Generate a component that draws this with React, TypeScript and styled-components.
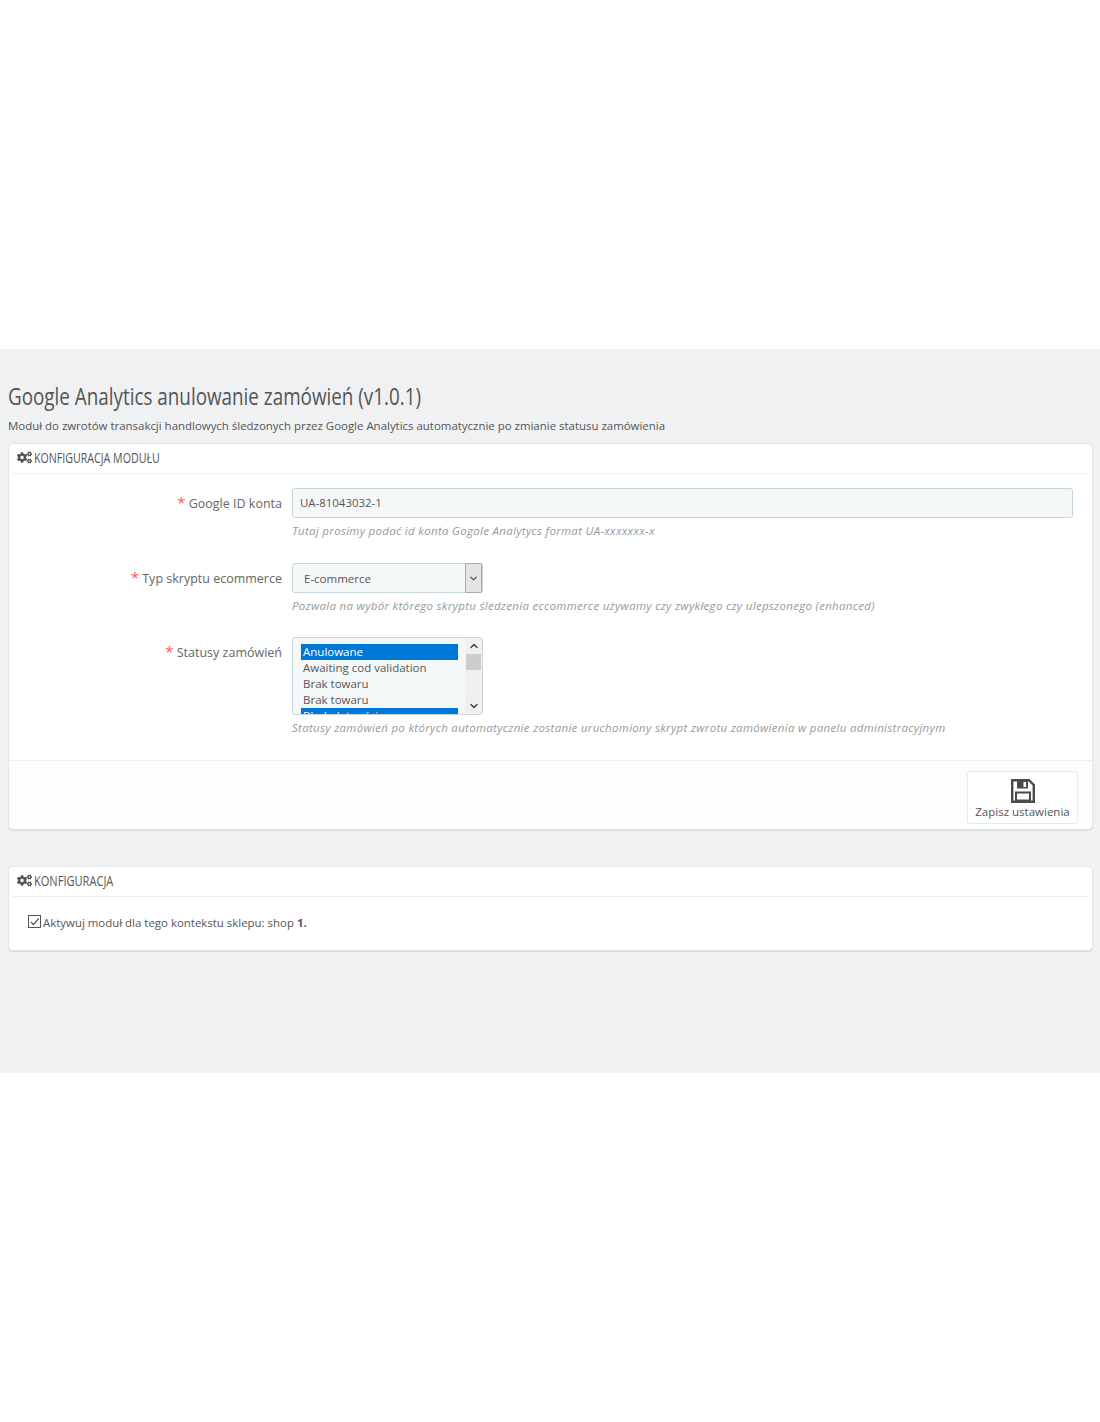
import React from "react";
import styled, { createGlobalStyle } from "styled-components";
import { FaCogs } from "react-icons/fa";
import { LuChevronDown, LuChevronUp } from "react-icons/lu";

const GlobalStyle = createGlobalStyle`
  html, body {
    margin: 0;
    padding: 0;
    background: #fff;
    font-family: "Open Sans", "Liberation Sans", sans-serif;
    font-size: 12px;
    color: #555;
  }
`;

const STATUSES = [
  { name: "Anulowane", selected: true },
  { name: "Awaiting cod validation" },
  { name: "Brak towaru" },
  { name: "Brak towaru" },
  { name: "Błąd płatności", selected: true },
];

const SaveIcon = () => (
  <svg width="24" height="24" viewBox="0 0 24 24">
    <path
      d="M1.2 1.2 H18 L22.8 6 V22.8 H1.2 Z"
      fill="none"
      stroke="#4a4a4a"
      strokeWidth="2.4"
    />
    <path d="M6 1.5 H17 V9.5 H6 Z" fill="#4a4a4a" />
    <rect x="12.5" y="3" width="2.6" height="5" fill="#fff" />
    <rect x="5" y="13.5" width="14" height="8" fill="#fff" stroke="#4a4a4a" strokeWidth="2" />
  </svg>
);

const App: React.FC = () => {
  return (
    <>
      <GlobalStyle />
      <Page>
        <Content>
          <Title>
            <Condensed $scale={0.785}>Google Analytics anulowanie zamówień (v1.0.1)</Condensed>
          </Title>
          <Description>
            Moduł do zwrotów transakcji handlowych śledzonych przez Google Analytics automatycznie po zmianie statusu zamówienia
          </Description>
          <Panel>
            <PanelHeading>
              <CogsIcon />
              <Condensed $scale={0.76}>KONFIGURACJA MODUŁU</Condensed>
            </PanelHeading>
            <FormBody>
              <FormRow>
                <Label>
                  <Star>*</Star> Google ID konta
                </Label>
                <Field>
                  <TextInput>UA-81043032-1</TextInput>
                  <Help>Tutaj prosimy podać id konta Gogole Analytycs format UA-xxxxxxx-x</Help>
                </Field>
              </FormRow>
              <FormRow>
                <Label>
                  <Star>*</Star> Typ skryptu ecommerce
                </Label>
                <Field>
                  <SelectBox>
                    <SelectValue>E-commerce</SelectValue>
                    <SelectArrow>
                      <LuChevronDown size={11} strokeWidth={2.5} />
                    </SelectArrow>
                  </SelectBox>
                  <Help>
                    Pozwala na wybór którego skryptu śledzenia eccommerce używamy czy zwykłego czy ulepszonego (enhanced)
                  </Help>
                </Field>
              </FormRow>
              <FormRow>
                <Label>
                  <Star>*</Star> Statusy zamówień
                </Label>
                <Field>
                  <ListBox>
                    <Options>
                      {STATUSES.map((s, i) => (
                        <Option key={i} $selected={!!s.selected}>
                          {s.name}
                        </Option>
                      ))}
                    </Options>
                    <ScrollTrack>
                      <ScrollButton>
                        <LuChevronUp size={12} strokeWidth={3} />
                      </ScrollButton>
                      <ScrollThumb />
                      <ScrollButton>
                        <LuChevronDown size={12} strokeWidth={3} />
                      </ScrollButton>
                    </ScrollTrack>
                  </ListBox>
                  <Help>
                    Statusy zamówień po których automatycznie zostanie uruchomiony skrypt zwrotu zamówienia w panelu administracyjnym
                  </Help>
                </Field>
              </FormRow>
            </FormBody>
            <PanelFooter>
              <SaveButton>
                <SaveIcon />
                Zapisz ustawienia
              </SaveButton>
            </PanelFooter>
          </Panel>
          <SecondPanel>
            <PanelHeading>
              <CogsIcon />
              <Condensed $scale={0.79}>KONFIGURACJA</Condensed>
            </PanelHeading>
            <CheckRow>
              <CheckBox>
                <svg width="14" height="14" viewBox="0 0 14 14">
                  <path d="M2.5 5.5 L5.5 9 L12.5 1" fill="none" stroke="#444" strokeWidth="1.4" />
                </svg>
              </CheckBox>
              <span>
                Aktywuj moduł dla tego kontekstu sklepu: shop <b>1.</b>
              </span>
            </CheckRow>
          </SecondPanel>
        </Content>
      </Page>
    </>
  );
};

export default App;

const Page = styled.div`
  padding-top: 349px;
  height: 1422px;
  box-sizing: border-box;
  overflow: hidden;
`;

const Content = styled.div`
  background: #eff1f2;
  height: 724px;
  box-sizing: border-box;
  padding: 33px 7px 0 8px;
`;

const Title = styled.h1`
  margin: 0;
  font-size: 24px;
  font-weight: 500;
  line-height: 28px;
  color: #555;
`;

// Ubuntu Condensed is not installed, so the headings are narrowed by hand
const Condensed = styled.span<{ $scale: number }>`
  display: inline-block;
  white-space: nowrap;
  transform: scaleX(${(p) => p.$scale});
  transform-origin: left center;
`;

const Description = styled.p`
  margin: 8px 0 0;
  font-size: 11.45px;
  line-height: 16px;
  color: #555;
`;

const Panel = styled.section`
  margin-top: 9px;
  background: #fff;
  border: 1px solid #e3e6e8;
  border-radius: 5px;
  box-shadow: 0 1px 1px rgba(0, 0, 0, 0.1);
`;

const SecondPanel = styled(Panel)`
  margin-top: 36px;
  height: 85px;
  box-sizing: border-box;
`;

const PanelHeading = styled.div`
  display: flex;
  align-items: center;
  gap: 2px;
  height: 30px;
  margin: 0 4px;
  padding-left: 4px;
  padding-bottom: 2px;
  box-sizing: border-box;
  border-bottom: 1px solid #eee;
  font-size: 14px;
  font-weight: 500;
  color: #555;
`;

const CogsIcon = styled(FaCogs)`
  width: 15px;
  height: 15px;
  color: #555;
`;

const FormBody = styled.div`
  padding: 14px 19px 24px 0;
  display: flex;
  flex-direction: column;
  gap: 24px;
`;

const FormRow = styled.div`
  display: flex;
  align-items: flex-start;

  &:last-child {
    margin-top: -1px;
  }
`;

const Label = styled.div`
  width: 273px;
  flex: none;
  text-align: right;
  padding-top: 5px;
  font-size: 12.5px;
  line-height: 18px;
  color: #666;
`;

const Star = styled.span`
  color: #f55;
  font-size: 15px;
`;

const Field = styled.div`
  margin-left: 10px;
  flex: 1;
`;

const TextInput = styled.div`
  height: 30px;
  box-sizing: border-box;
  border: 1px solid #c7d6db;
  border-radius: 3px;
  background: #f5f8f9;
  padding: 0 7px 2px;
  display: flex;
  align-items: center;
  font-size: 11.45px;
  color: #555;
`;

const Help = styled.div`
  margin-top: 5px;
  font-style: italic;
  font-size: 11.5px;
  letter-spacing: 0.3px;
  line-height: 16px;
  color: #999;
`;

const SelectBox = styled.div`
  width: 191px;
  height: 30px;
  box-sizing: border-box;
  border: 1px solid #c7d6db;
  border-radius: 3px;
  background: #f5f8f9;
  display: flex;
  align-items: center;
  justify-content: space-between;
`;

const SelectValue = styled.span`
  padding-left: 11px;
  font-size: 11.5px;
  color: #555;
`;

const SelectArrow = styled.span`
  width: 15px;
  height: 28px;
  border: 1px solid #aaa;
  border-radius: 1px;
  background: #e4e4e4;
  display: flex;
  align-items: center;
  justify-content: center;
  color: #444;
`;

const ListBox = styled.div`
  width: 191px;
  height: 78px;
  box-sizing: border-box;
  border: 1px solid #c7d6db;
  border-radius: 3px;
  background: #f5f8f9;
  display: flex;
  overflow: hidden;
`;

const Options = styled.div`
  flex: 1;
  padding: 6px 7px 0 8px;
  overflow: hidden;
`;

const Option = styled.div<{ $selected: boolean }>`
  height: 16px;
  line-height: 16px;
  padding-left: 2px;
  font-size: 11.5px;
  white-space: nowrap;
  background: ${(p) => (p.$selected ? "#0078d7" : "transparent")};
  color: ${(p) => (p.$selected ? "#fff" : "#555")};
`;

const ScrollTrack = styled.div`
  width: 17px;
  flex: none;
  background: #f0f0f0;
  display: flex;
  flex-direction: column;
`;

const ScrollButton = styled.div`
  height: 16px;
  display: flex;
  align-items: center;
  justify-content: center;
  color: #444;
`;

const ScrollThumb = styled.div`
  height: 16px;
  margin: 0 1px auto;
  background: #cdcdcd;
`;

const PanelFooter = styled.div`
  height: 69px;
  box-sizing: border-box;
  padding: 10px 14px 0 0;
  background: #fcfdfe;
  border-top: 1px solid #eee;
  border-radius: 0 0 5px 5px;
  display: flex;
  justify-content: flex-end;
`;

const SaveButton = styled.div`
  width: 111px;
  height: 53px;
  box-sizing: border-box;
  background: #fff;
  border: 1px solid #eaeaea;
  border-radius: 3px;
  display: flex;
  flex-direction: column;
  align-items: center;
  padding-top: 7px;
  gap: 1px;
  font-size: 11.5px;
  line-height: 16px;
  color: #555;
`;

const CheckRow = styled.div`
  display: flex;
  align-items: center;
  gap: 2px;
  padding: 18px 0 0 19px;
  font-size: 11.45px;
  color: #555;
`;

const CheckBox = styled.div`
  width: 11px;
  height: 11px;
  border: 1px solid #555;
  flex: none;
  margin-top: -3px;
  display: flex;
`;
